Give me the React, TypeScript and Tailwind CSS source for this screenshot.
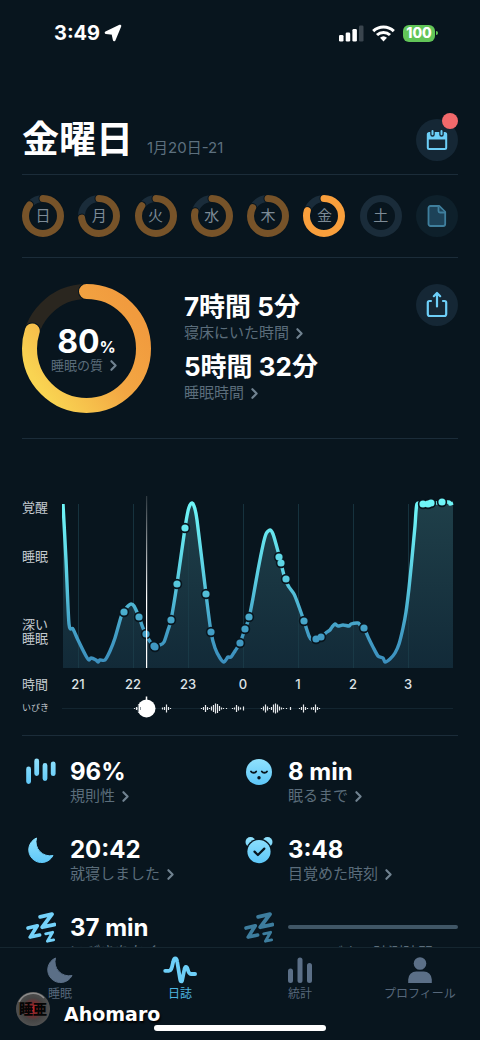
import React from 'react';
import { ChevronRight } from 'lucide-react';

type Point = [number, number];

type Day = { label: string; value: number; active?: boolean };

const days: Day[] = [
  { label: '日', value: 86 },
  { label: '月', value: 73 },
  { label: '火', value: 85 },
  { label: '水', value: 79 },
  { label: '木', value: 83 },
  { label: '金', value: 80, active: true },
  { label: '土', value: 0 },
];

const hours = ['21', '22', '23', '0', '1', '2', '3'];

const sleepCurve: Point[] = [
  [1, 14], [4, 70], [7, 134], [11, 139], [16, 150], [24, 166], [27, 170], [29, 168], [34, 170], [36, 172],
  [38, 170], [43, 170], [48, 161], [53, 148], [59, 127], [62, 121], [66, 116], [69, 114], [72, 116], [77, 127],
  [81, 138], [84, 144], [87, 150], [92, 156], [98, 155], [102, 152], [106, 140], [109, 130], [115, 94], [123, 38],
  [126, 21], [128, 15], [130, 13], [132, 16], [135, 30], [144, 104], [149, 142], [153, 158], [158, 168], [162, 172],
  [166, 167], [169, 167], [173, 161], [178, 153], [183, 139], [187, 128], [191, 108], [196, 80], [201, 55], [204, 44],
  [208, 40], [211, 44], [214, 54], [218, 69], [223, 89], [227, 97], [232, 104], [236, 114], [242, 131], [247, 146],
  [250, 150], [254, 149], [259, 147], [265, 142], [268, 140], [270, 137], [273, 134], [276, 136], [281, 135], [287, 136],
  [289, 134], [296, 133], [298, 135], [302, 138], [307, 149], [311, 157], [316, 166], [321, 168], [323, 172], [328, 169],
  [333, 163], [337, 154], [341, 138], [344, 122], [347, 98], [350, 68], [353, 36], [355, 14], [362, 14], [386, 12], [388, 14], [391, 13],
];

const sleepEvents: Point[] = [
  [62, 122], [77, 127], [84, 144], [92, 156], [93, 157], [109, 130], [115, 94], [123, 38], [144, 104], [149, 142],
  [178, 153], [183, 139], [187, 127], [217, 67], [219, 73], [224, 89], [242, 131], [254, 149], [259, 147],
  [302, 138], [361, 14], [366, 14], [369, 13], [380, 12],
];

// x position and height of every bar on the snore track
const snores: Point[] = [
  [72, 1], [74, 3], [76, 8], [78, 4], [100, 2], [102, 3], [104, 8], [106, 3], [108, 1],
  [139, 1], [141, 3], [143, 7], [145, 3], [147, 1], [149, 4], [151, 7], [153, 10], [155, 9], [157, 5], [159, 2], [161, 1], [164, 1],
  [170, 1], [172, 2], [174, 7], [176, 4], [178, 2], [181, 4],
  [199, 1], [201, 4], [203, 8], [205, 4], [207, 1], [209, 3], [211, 8], [213, 10], [215, 8], [217, 4], [219, 2], [221, 1], [224, 1], [228, 3],
  [237, 1], [239, 3], [241, 8], [243, 3], [245, 1], [249, 2], [251, 3], [253, 8], [255, 3], [257, 1],
];

function smoothPath(points: Point[]) {
  let d = `M${points[0][0]} ${points[0][1]}`;
  for (let i = 0; i < points.length - 1; i++) {
    const p0 = points[Math.max(i - 1, 0)];
    const p1 = points[i];
    const p2 = points[i + 1];
    const p3 = points[Math.min(i + 2, points.length - 1)];
    d += `C${p1[0] + (p2[0] - p0[0]) / 8} ${p1[1] + (p2[1] - p0[1]) / 8} ${p2[0] - (p3[0] - p1[0]) / 8} ${
      p2[1] - (p3[1] - p1[1]) / 8
    } ${p2[0]} ${p2[1]}`;
  }
  return d;
}

type RingProps = {
  size: number;
  width: number;
  value: number;
  color: string;
  track: string;
};

const Ring: React.FC<RingProps> = ({ size, width, value, color, track }) => {
  const c = size / 2;
  const r = (size - width) / 2;
  const d = `M${c} ${c - r}a${r} ${r} 0 1 1 0 ${2 * r}a${r} ${r} 0 1 1 0 ${-2 * r}`;
  return (
    <svg viewBox={`0 0 ${size} ${size}`} className="block w-full" fill="none" aria-hidden="true">
      <path d={d} stroke={track} strokeWidth={width} />
      {value > 0 && (
        <>
          <path d={d} pathLength={100} strokeDasharray={`${value} 100`} stroke="#08151e" strokeWidth={width + 2} strokeLinecap="round" />
          <path d={d} pathLength={100} strokeDasharray={`${value} 100`} stroke={color} strokeWidth={width} strokeLinecap="round" />
        </>
      )}
    </svg>
  );
};

// gradients shared by the ring and the stat icons
const Gradients = () => (
  <svg width="0" height="0" className="absolute" aria-hidden="true">
    <defs>
      <linearGradient id="quality" x1="0.85" y1="0.1" x2="0" y2="0.7">
        <stop offset="0" stopColor="#f19b3e" />
        <stop offset="0.45" stopColor="#f3a743" />
        <stop offset="1" stopColor="#f9d452" />
      </linearGradient>
      <linearGradient id="sky" x1="0" y1="0" x2="0" y2="28" gradientUnits="userSpaceOnUse">
        <stop offset="0" stopColor="#92e2fd" />
        <stop offset="1" stopColor="#5cc6f8" />
      </linearGradient>
    </defs>
  </svg>
);

const StatusBar = () => (
  <div className="flex h-16 shrink-0 items-center justify-between pt-0.5 pl-[54px] pr-[42px]">
    <div className="flex items-center gap-1 text-xl font-bold">
      <span>3:49</span>
      <svg width="18" height="18" viewBox="0 0 18 18" fill="#fff" stroke="#fff" strokeWidth="2.6" strokeLinejoin="round" aria-hidden="true">
        <path d="M16 2 2 8.600l6.800.900L10.200 16z" />
      </svg>
    </div>
    <div className="flex items-center gap-2">
      <svg width="25" height="17" viewBox="0 0 25 17" fill="#fff" aria-hidden="true">
        <rect x="0" y="10" width="4.5" height="6.5" rx="1.3" />
        <rect x="6.7" y="7.5" width="4.5" height="9" rx="1.3" />
        <rect x="13.4" y="4" width="4.5" height="12.5" rx="1.3" />
        <rect x="20" y="0.5" width="4.5" height="16" rx="1.3" fill="#3a454e" />
      </svg>
      <svg width="23" height="17" viewBox="0 0 23 17" fill="none" stroke="#fff" strokeWidth="3" aria-hidden="true">
        <path d="M1.2 6.2a14.8 14.8 0 0 1 20.6 0" />
        <path d="M5 10a9.4 9.4 0 0 1 13 0" />
        <path d="M11.5 16.5 8 12.8a5.3 5.3 0 0 1 7 0z" fill="#fff" stroke="none" />
      </svg>
      <div className="flex items-center gap-px">
        <span className="flex h-[17px] w-8 items-center justify-center rounded-md bg-[#62c558] text-sm font-extrabold">100</span>
        <span className="h-1 w-0.5 rounded-r bg-[#62c558]" />
      </div>
    </div>
  </div>
);

const Zzz: React.FC<{ color: string }> = ({ color }) => (
  <svg width="30" height="32" viewBox="0 0 30 32" fill="none" stroke={color} strokeLinecap="round" strokeLinejoin="round" aria-hidden="true">
    <path d="M14.2 4.800 26 2.200 16.300 15.200l12-2.600" strokeWidth="3.900" />
    <path d="M2 16.100 11.300 13.800 4.200 25.100l9.400-2.100" strokeWidth="3.600" />
    <path d="M19.700 21.800 26.600 20.300 21.400 29.200l6.200-1.300" strokeWidth="2.900" />
  </svg>
);

const Moon: React.FC<{ color: string }> = ({ color }) => (
  <svg width="28" height="28" viewBox="0 0 28 28" fill={color} stroke={color} strokeWidth="1" strokeLinejoin="round" aria-hidden="true">
    <path d="M9.500 2A12.800 12.800 0 1 0 26 19.500A14 14 0 0 1 9.500 2z" />
  </svg>
);

const RegularityIcon = () => (
  <svg width="30" height="28" viewBox="0 0 30 28" fill="none" stroke="url(#sky)" strokeWidth="4.8" strokeLinecap="round" aria-hidden="true">
    <path d="M2.600 11V23.500M10.700 3V15.500M19 7.500V20.500M27.200 6V15.700" />
  </svg>
);

const FaceIcon = () => (
  <svg width="28" height="28" viewBox="0 0 28 28" fill="none" stroke="#08151e" strokeWidth="1.8" strokeLinecap="round" aria-hidden="true">
    <circle cx="14" cy="14" r="13" fill="url(#sky)" stroke="none" />
    <path d="M6 13.400c1.200 1.800 4 1.800 5.200 0M16.800 13.400c1.200 1.800 4 1.800 5.200 0" />
    <circle cx="14" cy="19.800" r="1.700" fill="#08151e" stroke="none" />
  </svg>
);

const AlarmIcon = () => (
  <svg width="28" height="28" viewBox="0 0 28 28" fill="none" aria-hidden="true">
    <circle cx="5.500" cy="6" r="5" fill="url(#sky)" />
    <circle cx="22.500" cy="6" r="5" fill="url(#sky)" />
    <circle cx="14" cy="15.600" r="13" fill="#08151e" />
    <circle cx="14" cy="15.600" r="11.600" fill="url(#sky)" />
    <path d="m9.500 15.600 3.400 3.400 6.400-6.400" stroke="#08151e" strokeWidth="2.200" strokeLinecap="round" strokeLinejoin="round" />
  </svg>
);

type DetailLinkProps = { children: React.ReactNode; className?: string };

const DetailLink: React.FC<DetailLinkProps> = ({ children, className = 'text-[15px]' }) => (
  <a href="#" className={`flex items-center gap-0.5 whitespace-nowrap leading-5 text-[#5b6d7b] ${className}`}>
    {children}
    <ChevronRight size={17} strokeWidth={3} className="text-[#708290]" />
  </a>
);

type StatProps = { icon: React.ReactNode; value: string; label: string };

const Stat: React.FC<StatProps> = ({ icon, value, label }) => (
  <div className="flex gap-2.5">
    <div className="flex h-7 w-[38px] items-center justify-center">{icon}</div>
    <div>
      <div className="text-2xl leading-7 font-bold">{value}</div>
      <DetailLink>{label}</DetailLink>
    </div>
  </div>
);

const SleepChart = () => {
  const line = smoothPath(sleepCurve);
  return (
    <section className="flex pt-[51px] pb-2.5">
      <div className="w-10 shrink-0 text-[13px] leading-[14px] text-[#c3c9ce]">
        <p className="pt-2.5">覚醒</p>
        <p className="pt-[35px]">睡眠</p>
        <p className="pt-[54px]">
          深い
          <br />
          睡眠
        </p>
        <p className="pt-8">時間</p>
        <p className="pt-2.5 text-[9px]">いびき</p>
      </div>
      <svg viewBox="0 0 396 235" className="block min-w-0 flex-1" fill="none" role="img" aria-label="睡眠">
        <defs>
          <linearGradient id="line" x1="0" y1="12" x2="0" y2="172" gradientUnits="userSpaceOnUse">
            <stop offset="0" stopColor="#6ff6f8" />
            <stop offset="0.45" stopColor="#5bcfe2" />
            <stop offset="0.8" stopColor="#439fc6" />
            <stop offset="1" stopColor="#3c90be" />
          </linearGradient>
          <linearGradient id="area" x1="0" y1="12" x2="0" y2="178" gradientUnits="userSpaceOnUse">
            <stop offset="0" stopColor="#1f3f49" />
            <stop offset="1" stopColor="#122a38" />
          </linearGradient>
          <linearGradient id="playhead" x1="0" y1="6" x2="0" y2="178" gradientUnits="userSpaceOnUse">
            <stop offset="0" stopColor="#fff" stopOpacity="0.15" />
            <stop offset="0.6" stopColor="#fff" />
          </linearGradient>
        </defs>
        <path d={`${line}V178H1z`} fill="url(#area)" />
        {hours.map((hour, i) => (
          <g key={hour}>
            <path d={`M${16.5 + i * 55} 14V178`} stroke="#1c3f4c" strokeOpacity="0.7" />
            <text x={16 + i * 55} y={199} textAnchor="middle" fill="#dfe3e6" className="text-[13px] font-medium">
              {hour}
            </text>
          </g>
        ))}
        <path d={line} stroke="url(#line)" strokeWidth="3.4" strokeLinejoin="round" />
        {sleepEvents.map(([x, y], i) => (
          <circle key={i} cx={x} cy={y} r="5.200" fill="#08151e" />
        ))}
        {sleepEvents.map(([x, y], i) => (
          <circle key={i} cx={x} cy={y} r="3.600" fill="url(#line)" />
        ))}
        <path d="M0 218.500H391" stroke="#132530" />
        {snores.map(([x, h]) => (
          <path key={x} d={`M${x + 0.5} ${218.5 - h / 2}v${h}`} stroke="#e6e9eb" strokeWidth="1.200" />
        ))}
        <rect x="84" y="6" width="1.200" height="172" fill="url(#playhead)" />
        <path d="M84.500 206.500v6" stroke="#fff" strokeWidth="1.500" />
        <circle cx="84.500" cy="218.500" r="9" fill="#fff" />
        <path d="M76.500 215v7M78.500 217v3" stroke="#8b959c" />
      </svg>
    </section>
  );
};

const navItems = [
  { label: '睡眠', icon: <Moon color="#5b6f87" /> },
  {
    label: '日誌',
    active: true,
    icon: (
      <svg width="34" height="28" viewBox="0 0 34 28" fill="none" stroke="#6dcff8" strokeWidth="3.800" strokeLinecap="round" strokeLinejoin="round" aria-hidden="true">
        <path d="M2.200 14.800h3.600c1.700 0 2.400-1 3-3.200l1.400-5.800c.8-4.600 3.400-4.600 4 0l2.900 17.400c.5 3 1.900 3 2.300 0l2-9.800c.6-3.400 2.400-3.400 3.200-.4.800 3.400 1.400 5 3.300 5h4.200" />
      </svg>
    ),
  },
  {
    label: '統計',
    icon: (
      <svg width="28" height="28" viewBox="0 0 28 28" fill="none" stroke="#5b6f87" strokeWidth="5" strokeLinecap="round" aria-hidden="true">
        <path d="M4.500 15v9.500M14 4v20.500M23.500 9.500v15" />
      </svg>
    ),
  },
  {
    label: 'プロフィール',
    icon: (
      <svg width="26" height="28" viewBox="0 0 26 28" fill="#5b6f87" aria-hidden="true">
        <circle cx="13" cy="7.500" r="6.300" />
        <path d="M1.200 27v-3.500a8 8 0 0 1 8-8h7.600a8 8 0 0 1 8 8V27z" />
      </svg>
    ),
  },
];

const App = () => (
  <div className="relative flex h-screen flex-col overflow-hidden bg-[#08151e] font-[Inter,'Noto_Sans_CJK_JP',sans-serif] text-white">
    <Gradients />
    <StatusBar />
    <main className="min-h-0 flex-1 overflow-y-auto px-[22px] [scrollbar-width:none]">
      <header className="flex items-center justify-between border-b border-[#1b2c39] pt-[55px] pb-[13px]">
        <div className="flex items-baseline gap-3.5">
          <h1 className="text-[37px] leading-[42px] font-bold">金曜日</h1>
          <span className="text-[15px] leading-5 text-[#5d707e]">1月20日-21</span>
        </div>
        <button aria-label="カレンダー" className="relative flex size-[42px] items-center justify-center rounded-full bg-[#152735]">
          <svg width="22" height="22" viewBox="0 0 22 22" fill="none" aria-hidden="true">
            <rect x="1.800" y="4" width="18.400" height="16" rx="1.500" stroke="#6dcff8" strokeWidth="2" />
            <path d="M1.500 4h19v6.500h-19z" fill="#6dcff8" />
            <path d="M6.500 2.500v3M15.500 2.500v3" stroke="#152735" strokeWidth="4.500" strokeLinecap="round" />
            <path d="M6.500 2v3.200M15.500 2v3.200" stroke="#6dcff8" strokeWidth="2" strokeLinecap="round" />
          </svg>
          <span className="absolute -top-1.5 right-0 size-4 rounded-full bg-[#f1696b]" />
        </button>
      </header>

      <div className="flex items-center justify-between border-b border-[#1b2c39] py-5">
        {days.map((day) => (
          <button key={day.label} className="relative w-[42px]">
            <Ring size={42} width={7} value={day.value} color={day.active ? '#f99f3c' : '#775329'} track="#1a2c3a" />
            <span className="absolute inset-0 flex items-center justify-center text-[15px] text-[#7d8b96]">{day.label}</span>
          </button>
        ))}
        <button aria-label="メモ" className="flex size-[42px] items-center justify-center rounded-full bg-[#0e202b]">
          <svg width="20" height="24" viewBox="0 0 20 24" fill="#1d4258" stroke="#3f7f9d" strokeWidth="1.800" strokeLinejoin="round" aria-hidden="true">
            <path d="M3.500 2h8.700l6 6v12a2 2 0 0 1-2 2H3.500a2 2 0 0 1-2-2V4a2 2 0 0 1 2-2z" />
            <path d="M11.500 2.500V7a1.500 1.500 0 0 0 1.500 1.500h5" />
          </svg>
        </button>
      </div>

      <section className="flex items-start border-b border-[#1b2c39] pt-[26px] pb-[25px]">
        <div className="relative w-[129px]">
          <Ring size={129} width={15} value={80} color="url(#quality)" track="#2a261f" />
          <div className="absolute inset-0 flex flex-col items-center justify-center pt-2">
            <div className="text-[32px] leading-6 font-bold">
              80<span className="text-base leading-4">%</span>
            </div>
            <DetailLink className="text-[13px]">睡眠の質</DetailLink>
          </div>
        </div>
        <div className="flex-1 pt-[7px] pl-[33px]">
          <div className="text-[26px] leading-8 font-bold">7時間 5分</div>
          <DetailLink>寝床にいた時間</DetailLink>
          <div className="pt-2 text-[26px] leading-8 font-bold">5時間 32分</div>
          <DetailLink>睡眠時間</DetailLink>
        </div>
        <button aria-label="共有" className="flex size-[42px] items-center justify-center rounded-full bg-[#152735]">
          <svg width="22" height="28" viewBox="0 0 22 28" fill="none" stroke="#6dcff8" strokeWidth="2.200" strokeLinecap="round" strokeLinejoin="round" aria-hidden="true">
            <path d="M5 10H3.500A1.700 1.700 0 0 0 1.800 11.700V23a2 2 0 0 0 2 2h14.400a2 2 0 0 0 2-2V11.700A1.700 1.700 0 0 0 18.500 10H17" />
            <path d="M11 15.500V3M7.800 5.200 11 2l3.200 3.200" />
          </svg>
        </button>
      </section>

      <div className="border-b border-[#1b2c39]">
        <SleepChart />
      </div>

      <section className="grid grid-cols-2 gap-y-[30px] pt-[22px] pb-6">
        <Stat icon={<RegularityIcon />} value="96%" label="規則性" />
        <Stat icon={<FaceIcon />} value="8 min" label="眠るまで" />
        <Stat icon={<Moon color="url(#sky)" />} value="20:42" label="就寝しました" />
        <Stat icon={<AlarmIcon />} value="3:48" label="目覚めた時刻" />
        <Stat icon={<Zzz color="#74d2fa" />} value="37 min" label="いびきをかく" />
        <div className="flex gap-2.5">
          <div className="flex h-7 w-[38px] items-center justify-center">
            <Zzz color="#3d7d9e" />
          </div>
          <div className="flex-1 pt-[11px]">
            <div className="h-1 rounded-sm bg-[#405666]" />
            <p className="pt-3.5 text-center text-[15px] leading-5 text-[#5b6d7b]">いびきの計測時間</p>
          </div>
        </div>
      </section>
    </main>

    <footer className="h-[93px] shrink-0 border-t border-[#152630] pt-[7px]">
      <nav className="grid grid-cols-4">
        {navItems.map((item) => (
          <a key={item.label} href="#" className={`flex flex-col items-center text-xs leading-[18px] ${item.active ? 'text-[#4db4e0]' : 'text-[#56677a]'}`}>
            <span className="flex h-[30px] items-center">{item.icon}</span>
            {item.label}
          </a>
        ))}
      </nav>
      <div className="mx-auto mt-[22px] h-1.5 w-[172px] rounded-full bg-white" />
    </footer>

    <div className="absolute bottom-2 left-3.5 flex items-center gap-3">
      <svg width="38" height="42" viewBox="0 0 38 42" aria-hidden="true">
        <defs>
          <radialGradient id="seal" cx="0.5" cy="0.5" r="0.5">
            <stop offset="0" stopColor="#d0242c" />
            <stop offset="0.35" stopColor="#7a2a2d" />
            <stop offset="0.65" stopColor="#444" />
            <stop offset="1" stopColor="#505050" />
          </radialGradient>
        </defs>
        <circle cx="19" cy="19" r="17" fill="url(#seal)" />
        <path d="M5 12A15.500 15.500 0 0 1 30 8" stroke="#8b8b8b" strokeWidth="1.500" fill="none" />
        <text x="19" y="24" textAnchor="middle" fill="#050505" className="font-['Noto_Sans_CJK_JP',sans-serif] text-[14px] font-black">
          睡亜
        </text>
      </svg>
      <span className="pt-1.5 font-['DejaVu_Sans',sans-serif] text-[19px] leading-6 font-bold [text-shadow:1px_2px_2px_#000]">Ahomaro</span>
    </div>
  </div>
);

export default App;
